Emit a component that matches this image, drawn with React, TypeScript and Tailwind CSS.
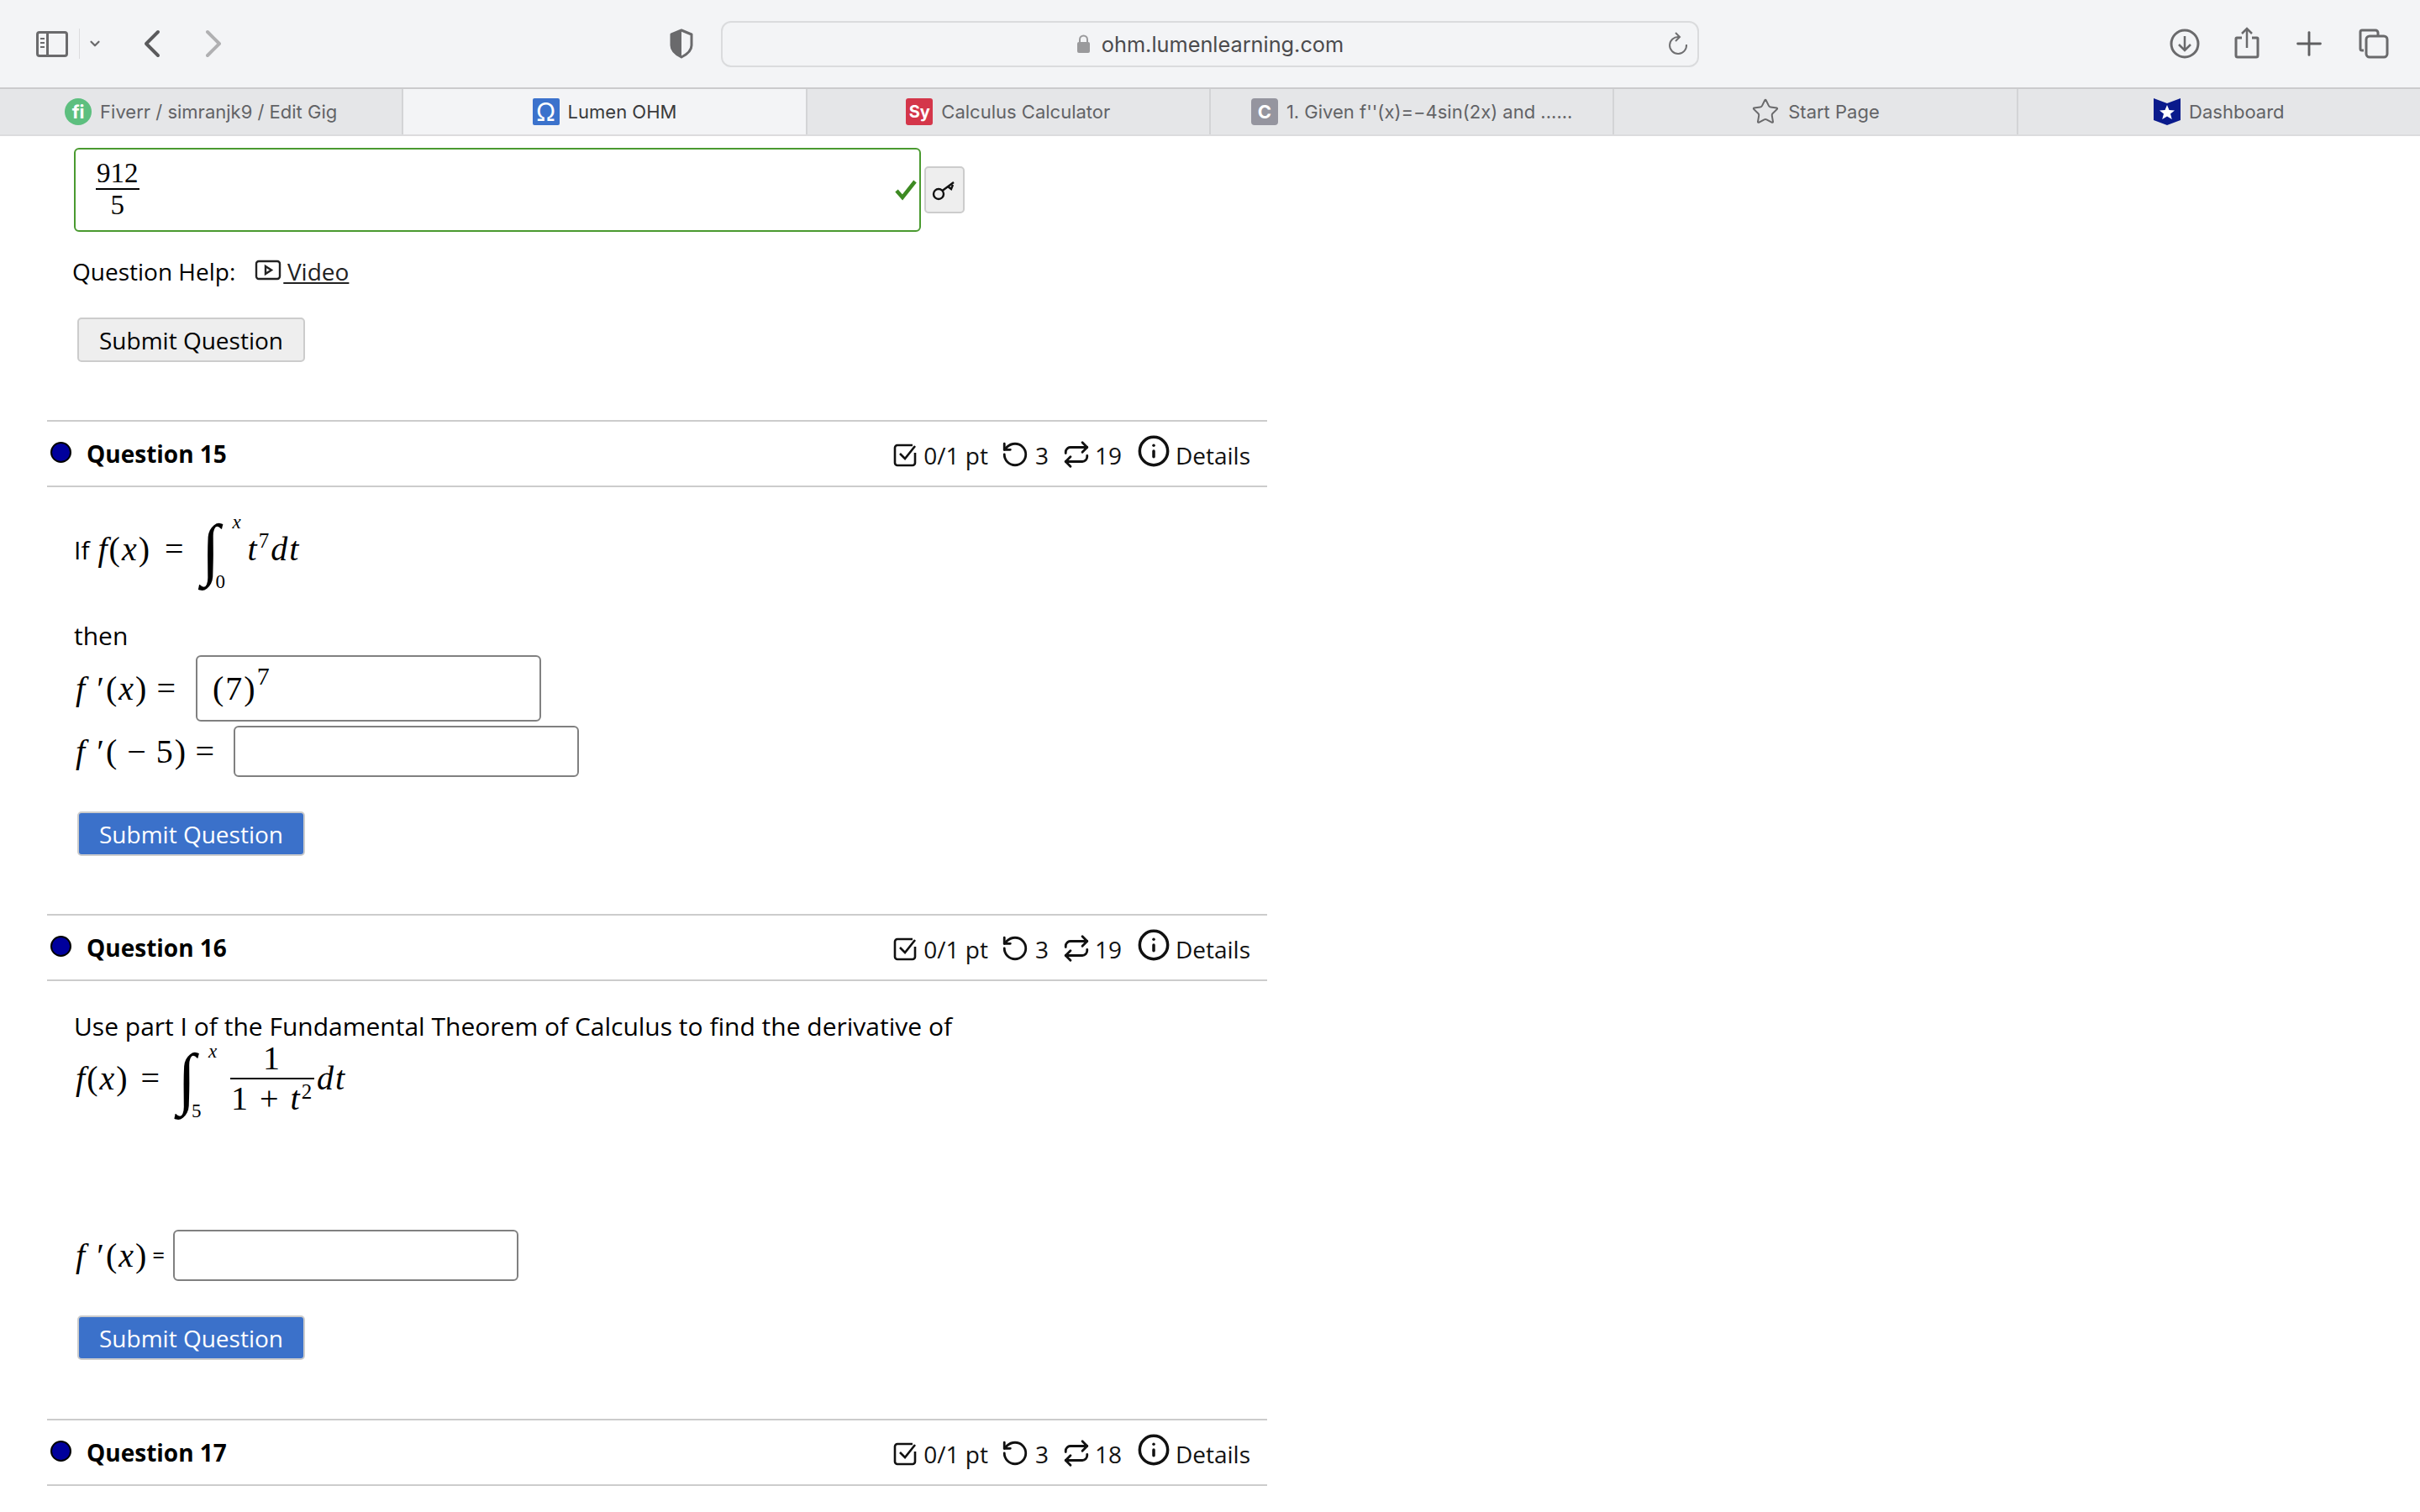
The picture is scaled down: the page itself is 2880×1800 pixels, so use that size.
import { ChevronDown, ChevronLeft, ChevronRight, Info, Plus, Repeat, RotateCcw, Star } from "lucide-react";

const mathCls = "font-['Liberation_Serif',serif] text-black tracking-[0.05em]";

function Tab({ icon, label, active }: { icon: React.ReactNode; label: string; active?: boolean }) {
  return (
    <div
      className={`flex-1 flex items-center justify-center gap-[10px] border-r-2 border-[#d3d4d6] last:border-r-0 text-[22px] ${
        active ? "bg-[#f3f4f6] text-[#3a3a3c]" : "text-[#626366]"
      }`}
    >
      {icon}
      <span>{label}</span>
    </div>
  );
}

function Favicon({ className, children }: { className: string; children: React.ReactNode }) {
  return (
    <span className={`w-[32px] h-[32px] flex items-center justify-center text-white font-bold ${className}`}>
      {children}
    </span>
  );
}

function Toolbar() {
  return (
    <div className="h-[104px] bg-[#f3f4f6] flex items-center text-[#626366]">
      <div className="ml-[43px] w-[38px] h-[31px] border-[3px] border-[#6a6a6c] rounded-[4px] flex">
        <div className="w-[12px] border-r-[3px] border-[#6a6a6c] flex flex-col gap-[3px] pt-[5px] pl-[2px]">
          <span className="w-[5px] h-[2px] bg-[#6a6a6c]" />
          <span className="w-[5px] h-[2px] bg-[#6a6a6c]" />
          <span className="w-[5px] h-[2px] bg-[#6a6a6c]" />
        </div>
      </div>
      <div className="ml-[13px] w-px h-[36px] bg-[#dcdcde]" />
      <ChevronDown size={18} strokeWidth={3} className="ml-[9px] text-[#6a6a6c]" />
      <ChevronLeft size={56} strokeWidth={1.7} className="ml-[31px] text-[#5a5a5c]" />
      <ChevronRight size={56} strokeWidth={1.7} className="ml-[17px] text-[#b0b0b2]" />
      <svg width="30" height="36" viewBox="0 0 30 36" className="ml-[514px]">
        <path d="M15 2 L27 7 V20 C27 27 21 31 15 34 C9 31 3 27 3 20 V7 Z" fill="none" stroke="#6a6a6c" strokeWidth="3" strokeLinejoin="round" />
        <path d="M15 2 L3 7 V20 C3 27 9 31 15 34 Z" fill="#6a6a6c" />
      </svg>
      <div className="ml-[32px] w-[1164px] h-[55px] rounded-[12px] border-2 border-[#dadbdd] bg-[#f3f4f6] flex items-center justify-center relative">
        <svg width="17" height="24" viewBox="0 0 17 24" className="mr-[13px]">
          <path d="M4 11 V7 a4.500 4.500 0 0 1 9 0 V11" fill="none" stroke="#9a9a9c" strokeWidth="2" />
          <rect x="1" y="10" width="15" height="13" rx="2" fill="#9a9a9c" />
        </svg>
        <span className="font-['Inter',sans-serif] text-[25.3px] text-[#4b4b4d] pt-[2px]">ohm.lumenlearning.com</span>
        <svg width="26" height="28" viewBox="0 0 26 28" className="absolute right-[10px] top-[11px]" fill="none" stroke="#6f6f71" strokeWidth="2">
          <path d="M14 6 A10 10 0 1 0 23 15" />
          <path d="M10 1 L15 6 L10 11" />
        </svg>
      </div>
      <svg width="36" height="36" viewBox="0 0 36 36" className="ml-[560px]" fill="none" stroke="#6a6a6c" strokeWidth="3">
        <circle cx="18" cy="18" r="16" />
        <path d="M18 9 V26 M11 19 L18 26 L25 19" strokeWidth="2.500" />
      </svg>
      <svg width="30" height="38" viewBox="0 0 30 38" className="ml-[41px] -mt-[2px]" fill="none" stroke="#6a6a6c" strokeWidth="3">
        <path d="M9 13 H3 a1 1 0 0 0 -1 1 V34 a2 2 0 0 0 2 2 H26 a2 2 0 0 0 2 -2 V14 a1 1 0 0 0 -1 -1 H21" />
        <path d="M15 25 V3 M9 8 L15 2 L21 8" strokeWidth="2.500" />
      </svg>
      <Plus size={46} strokeWidth={1.5} className="ml-[36px] text-[#5f5f61]" />
      <svg width="36" height="36" viewBox="0 0 36 36" className="ml-[36px]" fill="none" stroke="#6a6a6c" strokeWidth="3">
        <path d="M6 26 H4 a2 2 0 0 1 -2 -2 V4 a2 2 0 0 1 2 -2 H20 a3 3 0 0 1 3 3 V9" />
        <rect x="9" y="9" width="25" height="25" rx="4" />
      </svg>
    </div>
  );
}

function TabBar() {
  return (
    <div className="h-[58px] flex bg-[#e5e6e8] border-t-2 border-b-2 border-t-[#cbcbcd] border-b-[#dcdcde] font-['Inter',sans-serif]">
      <Tab
        label="Fiverr / simranjk9 / Edit Gig"
        icon={<Favicon className="rounded-full bg-[#5dbf7f] text-[22px]">fi</Favicon>}
      />
      <Tab
        active
        label="Lumen OHM"
        icon={<Favicon className="rounded-[2px] bg-[#3b72cc] text-[30px] font-normal">Ω</Favicon>}
      />
      <Tab
        label="Calculus Calculator"
        icon={<Favicon className="rounded-[3px] bg-[#d4364a] text-[20px]">Sy</Favicon>}
      />
      <Tab
        label={"1. Given f''(x)=−4sin(2x) and ......"}
        icon={<Favicon className="rounded-[4px] bg-[#95959f] text-[22px]">C</Favicon>}
      />
      <Tab label="Start Page" icon={<Star size={34} strokeWidth={1.4} className="text-[#6a6a6c]" />} />
      <Tab
        label="Dashboard"
        icon={
          <svg width="32" height="32" viewBox="0 0 32 32">
            <path d="M0 0 L16 6 L32 0 V26 L16 32 L0 26 Z" fill="#0a1a8c" />
            <path d="M16 8 L18.500 14 L25 14.500 L20 18.500 L21.800 25 L16 21.500 L10.200 25 L12 18.500 L7 14.500 L13.500 14 Z" fill="#fff" />
          </svg>
        }
      />
    </div>
  );
}

function SubmitButton({ primary }: { primary?: boolean }) {
  return (
    <button
      className={`block ml-[92px] w-[271px] h-[53px] rounded-[5px] border-2 border-[#cccccc] text-[28px] ${
        primary ? "bg-[#3b71ca] text-white" : "bg-[#eeeeee] text-black"
      }`}
    >
      Submit Question
    </button>
  );
}

function QuestionHeader({ n, tries }: { n: number; tries: number }) {
  return (
    <div className="ml-[56px] w-[1452px] h-[80px] border-y-2 border-[#cccccc] flex items-center">
      <span className="ml-[4px] w-[25px] h-[25px] rounded-full bg-[#00009c] border-2 border-black -mt-[3px]" />
      <span className="ml-[18px] font-bold text-[28px] -mt-[1px]">Question {n}</span>
      <div className="ml-auto mr-[20px] flex items-center text-[28px] text-[#111]">
        <svg width="30" height="30" viewBox="0 0 30 30" fill="none" stroke="#111" strokeWidth="2.600" className="mt-[2px]">
          <path d="M27 13 V25 a3 3 0 0 1 -3 3 H6 a3 3 0 0 1 -3 -3 V7 a3 3 0 0 1 3 -3 H24" />
          <path d="M9 14 L15 20 L27 5" />
        </svg>
        <span className="ml-[7px] mt-[3px]">0/1 pt</span>
        <RotateCcw size={34} strokeWidth={2} className="ml-[15px] mt-[2px]" />
        <span className="ml-[7px] mt-[3px]">3</span>
        <Repeat size={34} strokeWidth={2} className="ml-[16px] mt-[2px]" />
        <span className="ml-[5px] mt-[3px]">{tries}</span>
        <Info size={40} strokeWidth={2.1} className="ml-[18px] -mt-[6px]" />
        <span className="ml-[6px] mt-[3px]">Details</span>
      </div>
    </div>
  );
}

function TextBox({ className, children }: { className: string; children?: React.ReactNode }) {
  return (
    <div className={`w-[411px] rounded-[6px] border-2 border-[#808080] bg-white flex items-center ${className}`}>
      {children}
    </div>
  );
}

function Integral({ upper, lower }: { upper: string; lower: string }) {
  return (
    <span className="inline-flex items-center ml-[14px]">
      <span className={`${mathCls} w-[36px] flex justify-center text-[78px] leading-none scale-y-[1.05] italic`}>∫</span>
      <span className="flex flex-col justify-between h-[94px] mt-[6px] w-[20px] text-[23px] leading-none">
        <span className={`${mathCls} italic ml-[6px]`}>{upper}</span>
        <span className={`${mathCls} -ml-[14px]`}>{lower}</span>
      </span>
    </span>
  );
}

export default function App() {
  return (
    <div className="w-[2880px] h-[1800px] bg-white overflow-hidden font-['Open_Sans',sans-serif] text-black">
      <Toolbar />
      <TabBar />

      {/* answer from question 14 */}
      <div className="flex items-center mt-[14px] ml-[88px]">
        <div className="w-[1008px] h-[100px] rounded-[6px] border-2 border-[#4a9a30] flex items-center justify-between pl-[24px] pr-[3px]">
          <span className="font-['Liberation_Serif',serif] text-black flex flex-col items-center text-[33px] leading-[36px] -mt-[2px]">
            <span className="border-b-2 border-black px-[1px]">912</span>
            <span>5</span>
          </span>
          <svg width="26" height="26" viewBox="0 0 26 26" fill="none" stroke="#3d8a22" strokeWidth="4.500">
            <path d="M2 14 L9 22 L24 3" />
          </svg>
        </div>
        <div className="ml-[4px] w-[48px] h-[56px] rounded-[5px] border-2 border-[#cccccc] bg-[#eeeeee] flex items-center justify-center">
          <svg width="30" height="26" viewBox="0 0 30 26" fill="none" stroke="#111" strokeWidth="2.400">
            <circle cx="8" cy="18" r="6" />
            <path d="M12.500 14 L26 4 M19 9 L23 12 L25 7" />
          </svg>
        </div>
      </div>

      <div className="flex items-center ml-[86px] mt-[27px] h-[40px] text-[28px]">
        <span>Question Help:</span>
        <svg width="32" height="26" viewBox="0 0 32 26" className="ml-[23px] -mt-[2px]" fill="none" stroke="#222" strokeWidth="2.400">
          <rect x="2" y="2" width="28" height="21" rx="3" />
          <path d="M13 8 L20 12.500 L13 17 Z" />
        </svg>
        <span className="underline text-[#222] whitespace-pre ml-[2px]">{"\u2009Video"}</span>
      </div>

      <div className="mt-[35px]">
        <SubmitButton />
      </div>

      {/* question 15 */}
      <div className="mt-[69px]">
        <QuestionHeader n={15} tries={19} />
      </div>
      <div className="ml-[88px] mt-[19px] h-[110px] flex items-center">
        <span className="text-[30px]">If</span>
        <span className={`${mathCls} text-[40px] ml-[10px]`}>
          <i>f</i>(<i>x</i>)
        </span>
        <span className={`${mathCls} text-[40px] ml-[16px]`}>=</span>
        <Integral upper="x" lower="0" />
        <span className={`${mathCls} text-[40px] italic ml-[4px]`}>
          t<sup className="text-[25px] not-italic -top-[15px]">7</sup>dt
        </span>
      </div>
      <div className="ml-[88px] mt-[27px] h-[40px] text-[30px] flex items-center">then</div>
      <div className="ml-[88px] mt-[4px] h-[79px] flex items-center">
        <div className="w-[145px] pl-[2px] pr-[22px] flex justify-between">
          <span className={`${mathCls} text-[40px]`}>
            <i>f</i> ′(<i>x</i>)
          </span>
          <span className={`${mathCls} text-[40px]`}>=</span>
        </div>
        <TextBox className="h-[79px] pl-[18px]">
          <span className={`${mathCls} text-[40px]`}>
            (7)<sup className="text-[30px] -top-[18px]">7</sup>
          </span>
        </TextBox>
      </div>
      <div className="ml-[88px] mt-[5px] h-[61px] flex items-center">
        <div className="w-[190px] pl-[2px] pr-[21px] flex justify-between">
          <span className={`${mathCls} text-[40px] whitespace-pre`}>
            <i>f</i> ′({"\u2009−\u20095"})
          </span>
          <span className={`${mathCls} text-[40px]`}>=</span>
        </div>
        <TextBox className="h-[61px]" />
      </div>
      <div className="mt-[41px]">
        <SubmitButton primary />
      </div>

      {/* question 16 */}
      <div className="mt-[69px]">
        <QuestionHeader n={16} tries={19} />
      </div>
      <div className="ml-[88px] mt-[33px] h-[40px] text-[30px] flex items-center">
        Use part I of the Fundamental Theorem of Calculus to find the derivative of
      </div>
      <div className="ml-[88px] -mt-[7px] h-[100px] flex items-center">
        <span className={`${mathCls} text-[40px] ml-[2px]`}>
          <i>f</i>(<i>x</i>)
        </span>
        <span className={`${mathCls} text-[40px] ml-[14px]`}>=</span>
        <Integral upper="x" lower="5" />
        <span className={`${mathCls} flex flex-col items-center text-[40px] leading-[46px] ml-[12px]`}>
          <span className="w-[100px] text-center border-b-2 border-black">1</span>
          <span className="whitespace-pre">
            1 + <i>t</i>
            <sup className="text-[25px] -top-[13px]">2</sup>
          </span>
        </span>
        <span className={`${mathCls} text-[40px] italic ml-[3px]`}>dt</span>
      </div>
      <div className="ml-[88px] mt-[130px] h-[61px] flex items-center">
        <div className="w-[118px] pl-[2px] pr-[10px] flex justify-between items-center">
          <span className={`${mathCls} text-[40px]`}>
            <i>f</i> ′(<i>x</i>)
          </span>
          <span className="text-[26px]">=</span>
        </div>
        <TextBox className="h-[61px]" />
      </div>
      <div className="mt-[41px]">
        <SubmitButton primary />
      </div>

      {/* question 17 */}
      <div className="mt-[70px]">
        <QuestionHeader n={17} tries={18} />
      </div>
    </div>
  );
}
